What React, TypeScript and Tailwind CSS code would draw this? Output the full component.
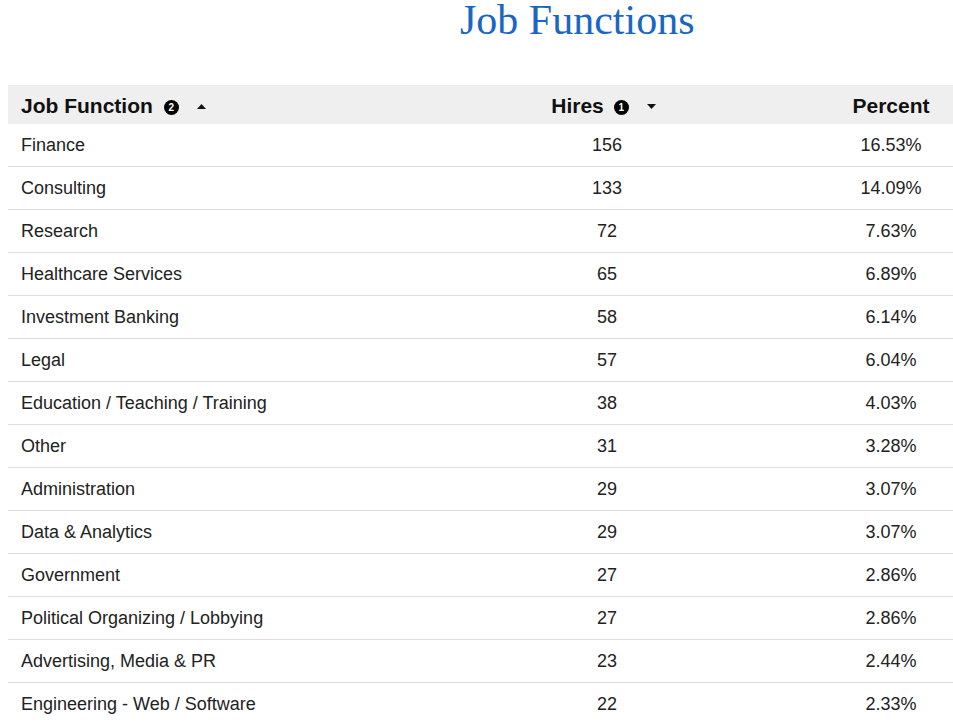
import React from "react";

const rows: [string, number, string][] = [
  ["Finance", 156, "16.53%"],
  ["Consulting", 133, "14.09%"],
  ["Research", 72, "7.63%"],
  ["Healthcare Services", 65, "6.89%"],
  ["Investment Banking", 58, "6.14%"],
  ["Legal", 57, "6.04%"],
  ["Education / Teaching / Training", 38, "4.03%"],
  ["Other", 31, "3.28%"],
  ["Administration", 29, "3.07%"],
  ["Data & Analytics", 29, "3.07%"],
  ["Government", 27, "2.86%"],
  ["Political Organizing / Lobbying", 27, "2.86%"],
  ["Advertising, Media & PR", 23, "2.44%"],
  ["Engineering - Web / Software", 22, "2.33%"],
];

function Badge({ n }: { n: number }) {
  return (
    <span className="flex h-[15px] w-[15px] items-center justify-center rounded-full bg-black text-[10px] font-bold leading-none text-white">
      {n}
    </span>
  );
}

function Caret({ up }: { up?: boolean }) {
  return (
    <svg width="9" height="5" viewBox="0 0 9 5" className="block">
      {up ? <path d="M0 5 L4.5 0 L9 5 Z" fill="#111" /> : <path d="M0 0 L4.5 5 L9 0 Z" fill="#111" />}
    </svg>
  );
}

export default function App() {
  return (
    <div className="min-h-[724px] w-full overflow-hidden bg-white" style={{ fontFamily: '"Liberation Sans", Arial, sans-serif' }}>
      <h1
        className="pl-[460px] text-[42px] font-normal leading-[40px] text-[#1a66c4]"
        style={{ fontFamily: '"Liberation Serif", "Times New Roman", serif' }}
      >
        Job Functions
      </h1>
      <div className="ml-2 mt-[45px] w-[945px]">
        <div className="grid h-[39px] grid-cols-[377px_444px_124px] items-center bg-[#efefef] pt-[3px] text-[21px] font-bold leading-[24px] text-[#111]">
          <div className="flex items-center pl-[13px]">
            <span>Job Function</span>
            <span className="ml-[11px] mt-[3px] flex"><Badge n={2} /></span>
            <span className="ml-[18px] flex"><Caret up /></span>
          </div>
          <div className="flex items-center justify-center pr-[7px]">
            <span>Hires</span>
            <span className="ml-[10px] mt-[3px] flex"><Badge n={1} /></span>
            <span className="ml-[18px] flex"><Caret /></span>
          </div>
          <div className="text-center">Percent</div>
        </div>
        {rows.map(([name, hires, pct]) => (
          <div
            key={name}
            className="grid h-[43px] grid-cols-[377px_444px_124px] items-center border-b border-[#dcdcdc] text-[18px] text-[#222]"
          >
            <div className="pl-[13px]">{name}</div>
            <div className="text-center">{hires}</div>
            <div className="text-center">{pct}</div>
          </div>
        ))}
      </div>
    </div>
  );
}
